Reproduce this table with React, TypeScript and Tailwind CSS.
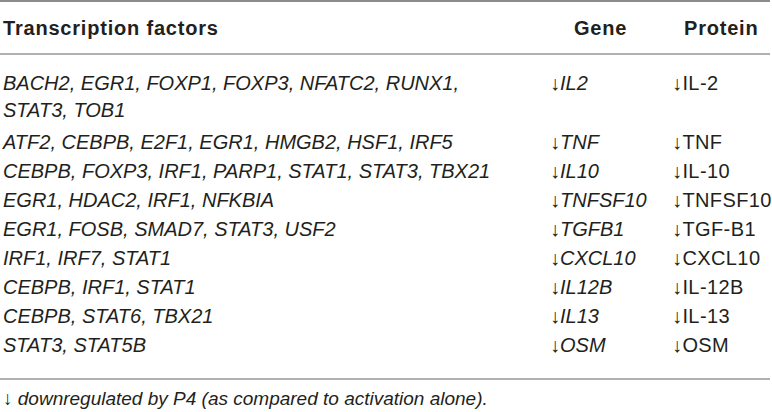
import React from 'react';

const rows = [
  { tf: 'BACH2, EGR1, FOXP1, FOXP3, NFATC2, RUNX1, STAT3, TOB1', gene: 'IL2', protein: 'IL-2' },
  { tf: 'ATF2, CEBPB, E2F1, EGR1, HMGB2, HSF1, IRF5', gene: 'TNF', protein: 'TNF' },
  { tf: 'CEBPB, FOXP3, IRF1, PARP1, STAT1, STAT3, TBX21', gene: 'IL10', protein: 'IL-10' },
  { tf: 'EGR1, HDAC2, IRF1, NFKBIA', gene: 'TNFSF10', protein: 'TNFSF10' },
  { tf: 'EGR1, FOSB, SMAD7, STAT3, USF2', gene: 'TGFB1', protein: 'TGF-B1' },
  { tf: 'IRF1, IRF7, STAT1', gene: 'CXCL10', protein: 'CXCL10' },
  { tf: 'CEBPB, IRF1, STAT1', gene: 'IL12B', protein: 'IL-12B' },
  { tf: 'CEBPB, STAT6, TBX21', gene: 'IL13', protein: 'IL-13' },
  { tf: 'STAT3, STAT5B', gene: 'OSM', protein: 'OSM' },
];

const App: React.FC = () => {
  return (
    <div className="w-[772px] h-[412px] bg-white text-[#231f20] font-['Liberation_Sans',Arial,sans-serif] overflow-hidden">
      <div className="w-[770px] border-t-2 border-[#8c8c8c]">
        {/* Header */}
        <div className="grid grid-cols-[550px_122px_1fr] h-[53px] items-center border-b-2 border-[#b0b0b0] text-[20px] font-bold tracking-[0.8px]">
          <div className="pl-[3px]">Transcription factors</div>
          <div className="pl-[24px]">Gene</div>
          <div className="pl-[12px]">Protein</div>
        </div>

        {/* Body */}
        <div className="pt-[14px] pb-[18px] border-b-2 border-[#b0b0b0] text-[20px] leading-[27px]">
          {rows.map((r, i) => (
            <div key={i} className={`grid grid-cols-[550px_122px_1fr] py-px ${i === 0 ? 'mb-[3px]' : ''}`}>
              <div className="pl-[3px] pr-[32px] italic">{r.tf}</div>
              <div>
                ↓<span className="italic">{r.gene}</span>
              </div>
              <div className="tracking-[0.4px]">↓{r.protein}</div>
            </div>
          ))}
        </div>

        {/* Footnote */}
        <div className="pl-[3px] pt-[5px] text-[19px] italic">
          ↓ downregulated by P4 (as compared to activation alone).
        </div>
      </div>
    </div>
  );
};

export default App;
